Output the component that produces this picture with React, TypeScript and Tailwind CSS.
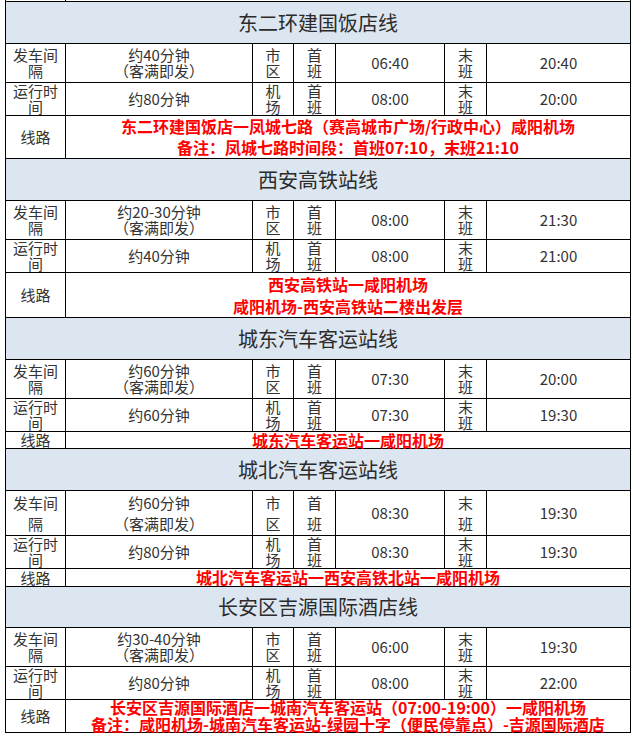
import React from 'react';

type Section = {
  title: string;
  interval: string;
  duration: string;
  times: [string, string, string, string];
  route: string[];
  row1Lead: string;
  routeLead: string;
};

const sections: Section[] = [
  {
    title: '东二环建国饭店线',
    interval: '约40分钟',
    duration: '约80分钟',
    times: ['06:40', '20:40', '08:00', '20:00'],
    route: ['东二环建国饭店一凤城七路（赛高城市广场/行政中心）咸阳机场', '备注：凤城七路时间段：首班07:10，末班21:10'],
    row1Lead: 'leading-[16px]',
    routeLead: 'leading-[21px]',
  },
  {
    title: '西安高铁站线',
    interval: '约20-30分钟',
    duration: '约40分钟',
    times: ['08:00', '21:30', '08:00', '21:00'],
    route: ['西安高铁站一咸阳机场', '咸阳机场-西安高铁站二楼出发层'],
    row1Lead: 'leading-[16px]',
    routeLead: 'leading-[22px]',
  },
  {
    title: '城东汽车客运站线',
    interval: '约60分钟',
    duration: '约60分钟',
    times: ['07:30', '20:00', '07:30', '19:30'],
    route: ['城东汽车客运站一咸阳机场'],
    row1Lead: 'leading-[16px]',
    routeLead: 'leading-[16px]',
  },
  {
    title: '城北汽车客运站线',
    interval: '约60分钟',
    duration: '约80分钟',
    times: ['08:30', '19:30', '08:30', '19:30'],
    route: ['城北汽车客运站一西安高铁北站一咸阳机场'],
    row1Lead: 'leading-[21px]',
    routeLead: 'leading-[17px]',
  },
  {
    title: '长安区吉源国际酒店线',
    interval: '约30-40分钟',
    duration: '约80分钟',
    times: ['06:00', '19:30', '08:00', '22:00'],
    route: ['长安区吉源国际酒店一城南汽车客运站（07:00-19:00）一咸阳机场', '备注：咸阳机场-城南汽车客运站-绿园十字（便民停靠点）-吉源国际酒店'],
    row1Lead: 'leading-[16px]',
    routeLead: 'leading-[17px]',
  },
];

const Cell = ({ children, className = '' }: { children: React.ReactNode; className?: string }) => (
  <div className={`flex items-center justify-center bg-white text-center ${className}`}>{children}</div>
);

const Block = ({ s }: { s: Section }) => (
  <>
    <div className="col-span-7 flex items-center justify-center bg-[#dce6f1] text-[20px] text-[#2b2b2b]">
      {s.title}
    </div>

    <Cell className={s.row1Lead}>发车间<br />隔</Cell>
    <Cell className={s.row1Lead}>{s.interval}<br />（客满即发）</Cell>
    <Cell className={s.row1Lead}>市<br />区</Cell>
    <Cell className={s.row1Lead}>首<br />班</Cell>
    <Cell>{s.times[0]}</Cell>
    <Cell className={s.row1Lead}>末<br />班</Cell>
    <Cell>{s.times[1]}</Cell>

    <Cell className="leading-[16px]">运行时<br />间</Cell>
    <Cell>{s.duration}</Cell>
    <Cell className="leading-[16px]">机<br />场</Cell>
    <Cell className="leading-[16px]">首<br />班</Cell>
    <Cell>{s.times[2]}</Cell>
    <Cell className="leading-[16px]">末<br />班</Cell>
    <Cell>{s.times[3]}</Cell>

    <Cell className="leading-[16px]">线路</Cell>
    <div className={`col-span-6 flex flex-col items-center justify-center bg-white text-center text-[16px] font-bold whitespace-nowrap text-[#ff0000] ${s.routeLead}`}>
      {s.route.map((line) => (
        <div key={line}>{line}</div>
      ))}
    </div>
  </>
);

export default function App() {
  return (
    <div className="h-[733px] w-[635px] overflow-hidden bg-white font-['Noto_Sans_CJK_SC',sans-serif] text-[15px] text-[#333]">
      <div className="ml-[5px] grid w-[626px] grid-cols-[59px_186px_40px_41px_108px_41px_143px] grid-rows-[1px_41px_38px_32px_42px_41px_38px_32px_44px_41px_38px_32px_16px_41px_44px_32px_17px_40px_38px_32px_32px] gap-px bg-black px-px pb-px">
        <div className="bg-white" />
        <div className="col-span-6 bg-white" />
        {sections.map((s) => (
          <Block key={s.title} s={s} />
        ))}
      </div>
    </div>
  );
}
